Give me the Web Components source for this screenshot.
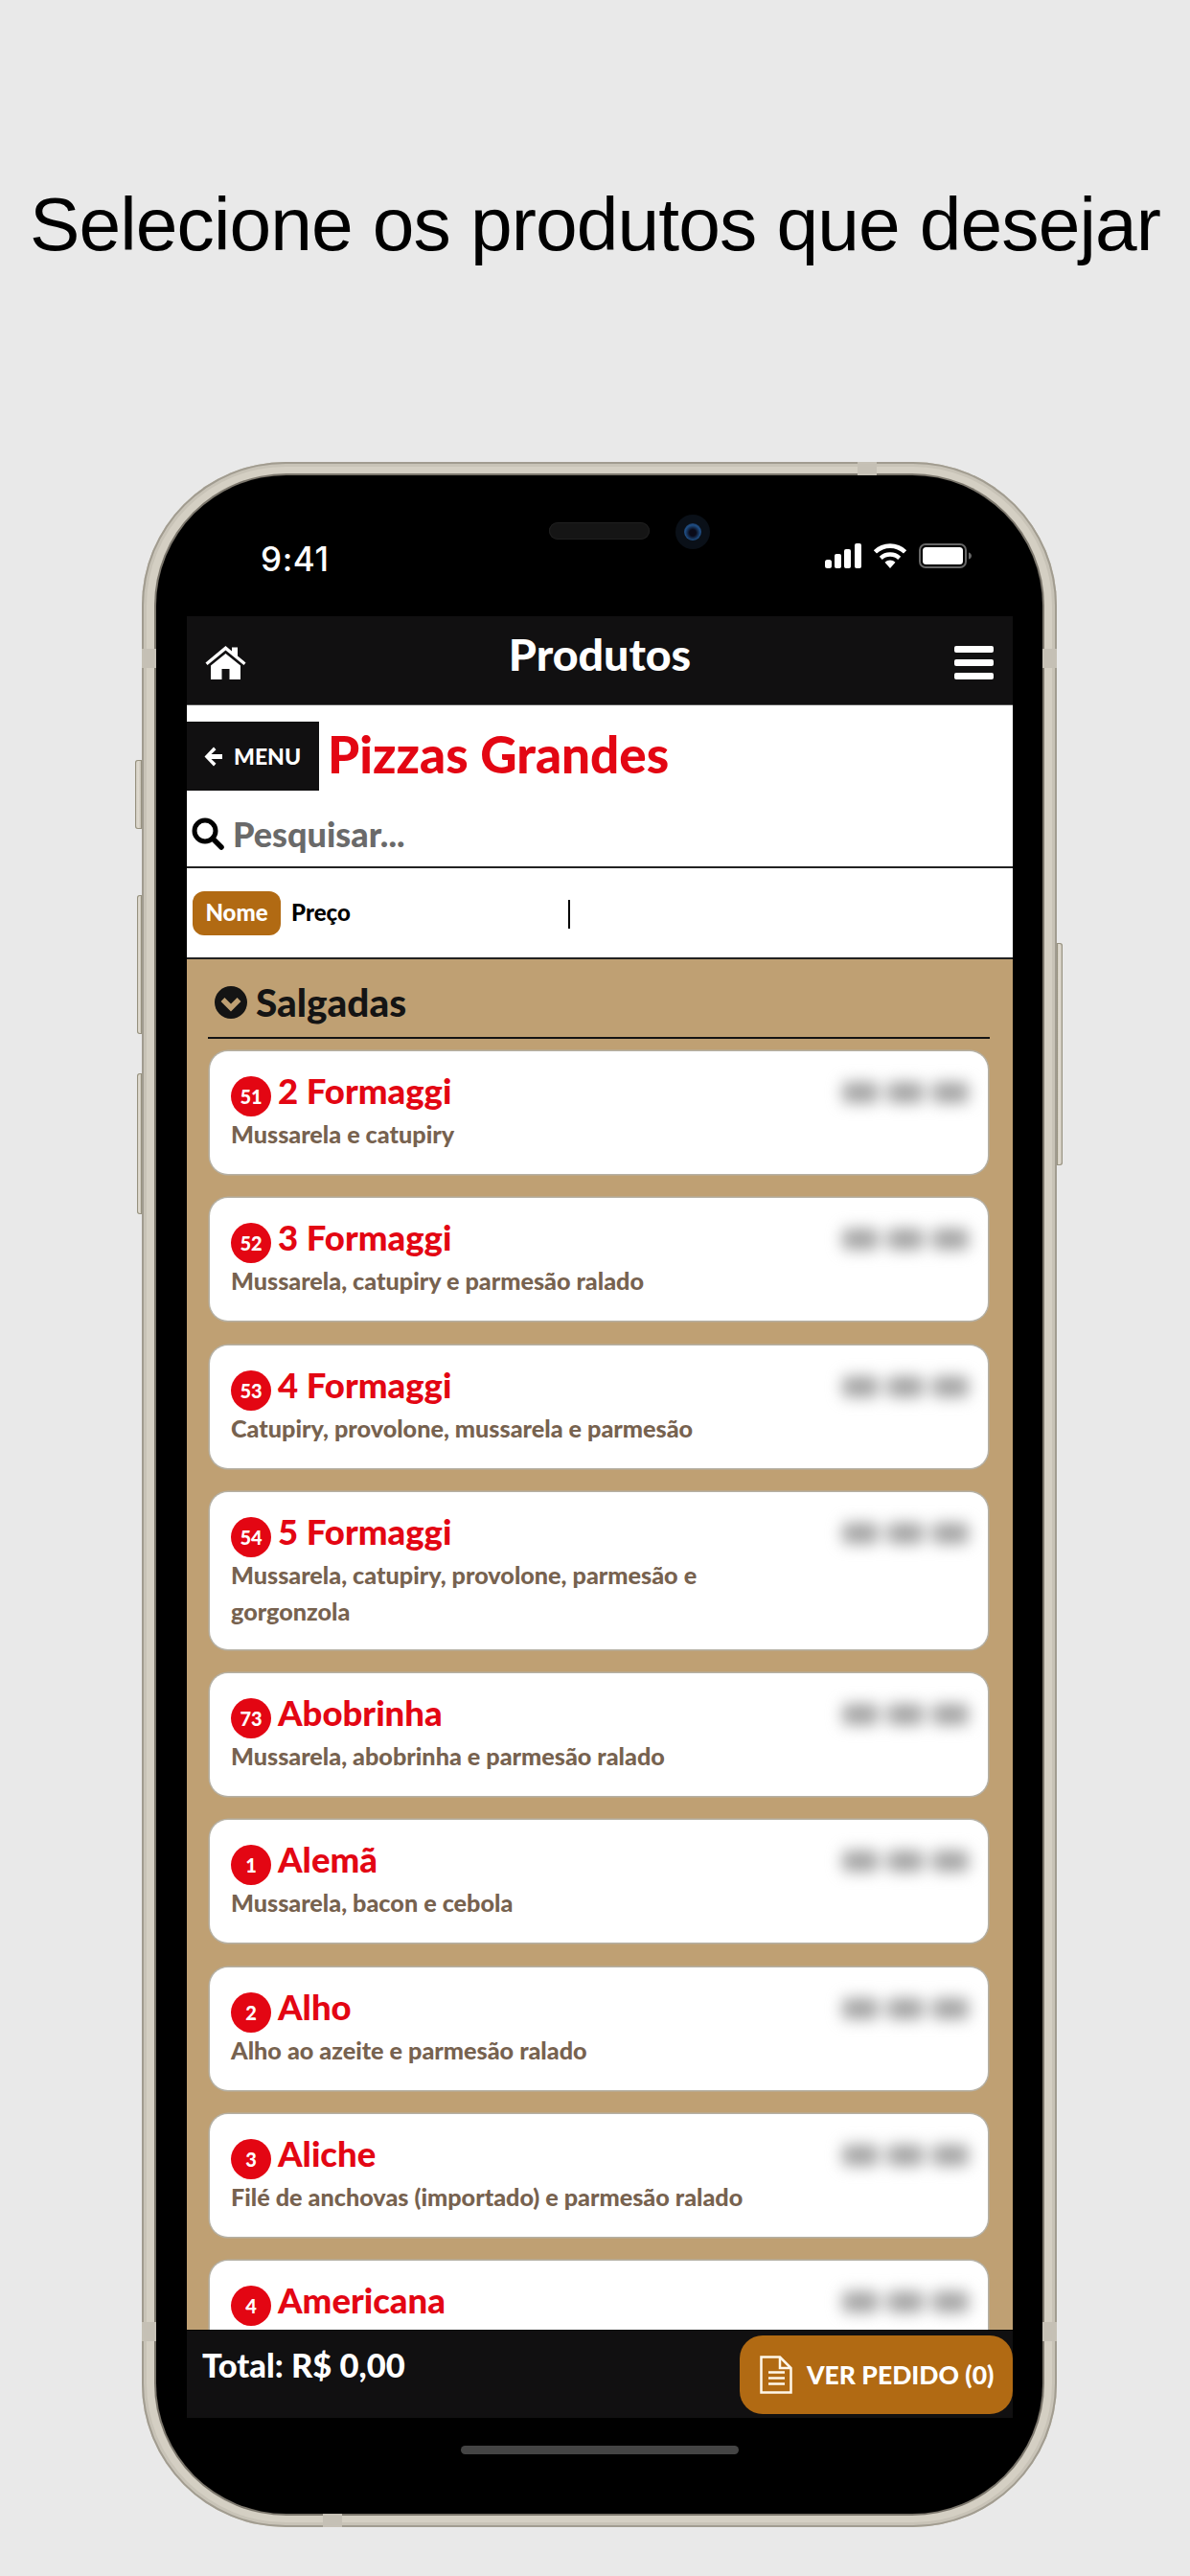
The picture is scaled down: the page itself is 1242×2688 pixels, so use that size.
<!DOCTYPE html>
<html lang="pt"><head><meta charset="utf-8"><title>Pizzas Grandes</title>
<style>
html,body{margin:0;padding:0;background:#e9e9e9}
body{width:1242px;height:2688px;overflow:hidden;font-family:Lato,"Open Sans",sans-serif}
</style></head><body>
<promo-page>
<span slot="headline">Selecione os produtos que desejar</span>
<phone-frame>
  <status-bar slot="status"></status-bar>
  <top-bar title="Produtos"></top-bar>
  <menu-head label="MENU">Pizzas Grandes</menu-head>
  <search-row>Pesquisar...</search-row>
  <sort-row></sort-row>
  <product-list heading="Salgadas">
    <product-card num="51" name="2 Formaggi" desc="Mussarela e catupiry"></product-card>
    <product-card num="52" name="3 Formaggi" desc="Mussarela, catupiry e parmesão ralado"></product-card>
    <product-card num="53" name="4 Formaggi" desc="Catupiry, provolone, mussarela e parmesão"></product-card>
    <product-card num="54" name="5 Formaggi" desc="Mussarela, catupiry, provolone, parmesão e gorgonzola"></product-card>
    <product-card num="73" name="Abobrinha" desc="Mussarela, abobrinha e parmesão ralado"></product-card>
    <product-card num="1" name="Alemã" desc="Mussarela, bacon e cebola"></product-card>
    <product-card num="2" name="Alho" desc="Alho ao azeite e parmesão ralado"></product-card>
    <product-card num="3" name="Aliche" desc="Filé de anchovas (importado) e parmesão ralado"></product-card>
    <product-card num="4" name="Americana" desc=""></product-card>
  </product-list>
  <order-bar total="Total: R$ 0,00" action="VER PEDIDO (0)"></order-bar>
  <home-pill slot="home"></home-pill>
</phone-frame>
</promo-page>
<script>
function def(name, css, html){
  customElements.define(name, class extends HTMLElement{
    constructor(){super();this.attachShadow({mode:'open'});}
    connectedCallback(){ if(this._d)return; this._d=1;
      const body=typeof html==='function'?html(k=>this.getAttribute(k)||''):html;
      this.shadowRoot.innerHTML='<style>'+css+'</style>'+body; }
  });
}
const F='Lato,"Open Sans",sans-serif';
def('promo-page',`
:host{display:block;width:1242px;height:2688px;background:#e9e9e9}
.h{display:block;padding-top:187px;height:482px;box-sizing:border-box;text-align:center;
font:400 78.5px/94px "Liberation Sans",Arial,sans-serif;letter-spacing:-.87px;color:#000;white-space:nowrap}
.p{padding-left:148px}
`,`<div class="h"><slot name="headline"></slot></div><div class="p"><slot></slot></div>`);

def('phone-frame',`
:host{display:block;position:relative;width:955px;height:2155px;box-sizing:border-box;border-radius:150px;
background:#d4cfc3;box-shadow:inset 0 0 0 2px #a19c90,inset 0 0 0 5px #c8c3b7;padding:14px 15px;}
.rim{height:100%;background:#000;border-radius:136px;box-sizing:border-box;padding:0 31px 0 32px;display:flex;flex-direction:column;overflow:hidden;
box-shadow:0 0 0 2px #7b766c}
.content{display:flex;flex-direction:column;height:1880px;flex:none}
.btn{position:absolute;background:linear-gradient(90deg,#c4bfb3,#e2ddd2 45%,#bdb8ac);box-shadow:inset 0 0 0 1px #96917f;box-sizing:border-box;border-radius:3px 0 0 3px}
.b1{left:-7px;top:311px;width:7px;height:72px}
.b2{left:-5px;top:452px;width:5px;height:145px}
.b3{left:-5px;top:638px;width:5px;height:147px}
.b4{right:-6px;top:502px;width:6px;height:232px;border-radius:0 3px 3px 0}
.ant{position:absolute;background:#c5c0b5}
.a1{left:747px;top:0;width:20px;height:14px}
.a2{left:189px;bottom:0;width:20px;height:14px}
.a3{left:0;top:195px;width:15px;height:20px}
.a4{right:0;top:195px;width:15px;height:20px}
.a5{left:0;top:1941px;width:15px;height:20px}
.a6{right:0;top:1941px;width:15px;height:20px}
`,`<span class="btn b1"></span><span class="btn b2"></span><span class="btn b3"></span><span class="btn b4"></span>
<span class="ant a1"></span><span class="ant a2"></span><span class="ant a3"></span><span class="ant a4"></span><span class="ant a5"></span><span class="ant a6"></span>
<div class="rim"><slot name="status"></slot><div class="content"><slot></slot></div><slot name="home"></slot></div>`);

def('status-bar',`
:host{display:flex;flex:none;height:147px;box-sizing:border-box;position:relative;color:#fff;justify-content:space-between;padding:67px 42px 0 77px}
.t{font:500 35px/40px "Inter","Liberation Sans",sans-serif;letter-spacing:.6px}
.r{display:flex;align-items:flex-start;gap:12px;padding-top:4px}
.sp{position:absolute;left:378px;top:49px;width:105px;height:18px;border-radius:9px;background:#151515;box-shadow:inset 0 0 0 1px #202020}
.cam{position:absolute;left:510px;top:41px;width:36px;height:36px;border-radius:50%;background:#0a1018}
.cam i{position:absolute;left:9px;top:9px;width:18px;height:18px;border-radius:50%;background:radial-gradient(circle at 50% 55%,#0a0a18 25%,#1f4f86 60%,#141c30 90%)}
`,`<span class="t">9:41</span>
<span class="sp"></span><span class="cam"><i></i></span>
<span class="r">
<svg width="38" height="26" viewBox="0 0 38 26"><g fill="#fff"><rect x="0" y="17" width="7" height="9" rx="2.5"/><rect x="10" y="11" width="7" height="15" rx="2"/><rect x="20" y="6" width="7" height="20" rx="2"/><rect x="31" y="0" width="7" height="26" rx="2"/></g></svg>
<svg width="36" height="26" viewBox="0 0 36 26"><path d="M18 26l-5.500-6.200a8 8 0 0 1 11 0zM9.800 16.900l-3-3.200a16.500 16.500 0 0 1 22.400 0l-3 3.200a12 12 0 0 0-16.400 0zM4 10.500L.8 7.200a25 25 0 0 1 34.400 0L32 10.500a20.500 20.500 0 0 0-28 0z" fill="#fff"/></svg>
<svg width="56" height="26" viewBox="0 0 56 26"><rect x="1" y="1" width="48" height="24" rx="6" fill="none" stroke="#666" stroke-width="2"/><rect x="4" y="4" width="42" height="18" rx="3.500" fill="#fff"/><path d="M52 9.500c2 .5 3 2 3 3.500s-1 3-3 3.500z" fill="#666"/></svg>
</span>`);

def('top-bar',`
:host{display:flex;flex:none;position:relative;height:93px;background:#111011;color:#fff;align-items:flex-start;justify-content:space-between;padding:0 20px 0 19px;box-sizing:border-box;border-bottom:1px solid #555}
.t{position:absolute;left:0;right:0;top:9px;text-align:center;font:900 46.5px/60px ${F}}
svg{margin-top:31px;display:block}
`,a=>`<svg width="43" height="36" viewBox="0 0 43 36"><path d="M21.500 0L28 5.500V1.500h6v9l8.500 7-2 2.500L21.500 4.500 2.500 20l-2-2.500z" fill="#fff"/><path d="M21.500 8L6 20.500V35h11.500V24h8v11H37V20.500z" fill="#fff"/></svg>
<span class="t">${a('title')}</span>
<svg width="41" height="36" viewBox="0 0 41 36"><g fill="#fff"><rect width="41" height="7" rx="2"/><rect y="14" width="41" height="7" rx="2"/><rect y="28" width="41" height="7" rx="2"/></g></svg>`);

def('menu-head',`
:host{display:flex;flex:none;height:89px;padding-top:17px;box-sizing:border-box;background:#fff;align-items:flex-start;gap:9px}
.m{display:flex;align-items:center;gap:11px;width:138px;height:72px;box-sizing:border-box;padding-left:17px;background:#111011;color:#fff;font:900 23px/1 ${F}}
.h{font:900 53px/68px ${F};color:#e30613}
`,a=>`<span class="m"><svg width="21" height="23" viewBox="0 0 21 23"><path d="M11 1.500L1.500 11.500 11 21.500l2.500-2.800L8.500 14H20V9H8.500l5-4.700z" fill="#fff"/></svg>${a('label')}</span><span class="h"><slot></slot></span>`);

def('search-row',`
:host{display:flex;flex:none;height:81px;box-sizing:border-box;background:#fff;align-items:center;gap:9px;padding:0 0 0 5px;border-bottom:2px solid #222;color:#6a6a6a;font:900 36px/1 ${F}}
svg{margin-top:10px}
`,`<svg width="34" height="34" viewBox="0 0 34 34"><circle cx="14" cy="14" r="11" fill="none" stroke="#000" stroke-width="5"/><path d="M22 22l9 9" stroke="#000" stroke-width="5.500" stroke-linecap="round"/></svg><span style="padding-top:11px"><slot></slot></span>`);

def('sort-row',`
:host{display:flex;flex:none;position:relative;height:95px;box-sizing:border-box;background:#fff;align-items:flex-start;padding:24px 0 0 6px;gap:11px;border-bottom:2px solid #222;font:900 24px/44px ${F}}
.n{width:92px;height:46px;border-radius:12px;background:#b16a13;color:#fff;text-align:center}
.p{color:#000}
.c{position:absolute;left:398px;top:33px;width:2px;height:30px;background:#000}
`,`<span class="n">Nome</span><span class="p">Preço</span><span class="c"></span>`);

def('product-list',`
:host{display:block;flex:1;min-height:0;overflow:hidden;background:#bfa073;padding:0 24px 0 22px;box-sizing:border-box}
.h{display:flex;align-items:center;gap:9px;height:83px;box-sizing:border-box;padding:9px 0 0 7px;border-bottom:2px solid #141414;margin-bottom:13px;font:900 40.5px/1 ${F};color:#141414}
.l{display:flex;flex-direction:column;gap:25.3px;padding:0 2px}
`,a=>`<div class="h"><svg width="34" height="34" viewBox="0 0 34 34"><circle cx="17" cy="17" r="17" fill="#141414"/><path d="M8.500 14l8.500 8.500L25.500 14" fill="none" stroke="#bfa073" stroke-width="5.500"/></svg><span>${a('heading')}</span></div><div class="l"><slot></slot></div>`);

def('product-card',`
:host{display:block;flex:none;position:relative;background:#fff;border-radius:19px;box-shadow:0 0 0 1.500px #b5b0a4;padding:26px 21px 21px 22px;min-height:128px;box-sizing:border-box}
.a{display:flex;align-items:flex-start;gap:7px;height:42px}
.b{flex:none;width:42px;height:42px;border-radius:50%;background:#e30613;color:#fff;font:900 20px/42px ${F};text-align:center}
.n{font:900 36.5px/36px ${F};color:#e30613;margin-top:-3px}
.d{font:900 25.2px/38px ${F};color:#77624f;width:560px;margin-top:-1px}
.pr{position:absolute;right:20px;top:32px;display:flex;gap:9px;filter:blur(8px)}
.pr i{display:block;height:22px;background:#a4a4a4;border-radius:6px}
`,a=>`<div class="a"><span class="b">${a('num')}</span><span class="n">${a('name')}</span></div><div class="d">${a('desc')}</div>
<div class="pr" aria-hidden="true"><i style="width:38px"></i><i style="width:38px"></i><i style="width:38px"></i></div>`);

def('order-bar',`
:host{display:block;flex:none;position:relative;height:92px;background:#111011;color:#fff;border-top:1px solid #000;box-sizing:border-box}
.t{position:absolute;left:16px;top:13px;font:900 34.5px/46px ${F}}
.b{position:absolute;right:0;top:5px;width:285px;height:82px;border-radius:24px;background:#b16a13;display:flex;align-items:center;gap:15px;padding-left:21px;box-sizing:border-box;font:900 26.5px/1 ${F}}
`,a=>`<span class="t">${a('total')}</span><span class="b"><svg width="34" height="40" viewBox="0 0 34 40"><path d="M1.500 1.500H21L32.500 13V38.500H1.500z" fill="none" stroke="#fff8ea" stroke-width="2.500"/><path d="M21 1.500V13H32.500" fill="none" stroke="#fff8ea" stroke-width="2.500"/><path d="M9 17.500h17M9 23.500h17M9 29.500h17" stroke="#fff8ea" stroke-width="2.500"/></svg>${a('action')}</span>`);

def('home-pill',`
:host{display:block;flex:none;padding-top:29px}
i{display:block;margin:0 auto;width:290px;height:9px;border-radius:5px;background:#444}
`,`<i></i>`);
</script>
</body></html>
